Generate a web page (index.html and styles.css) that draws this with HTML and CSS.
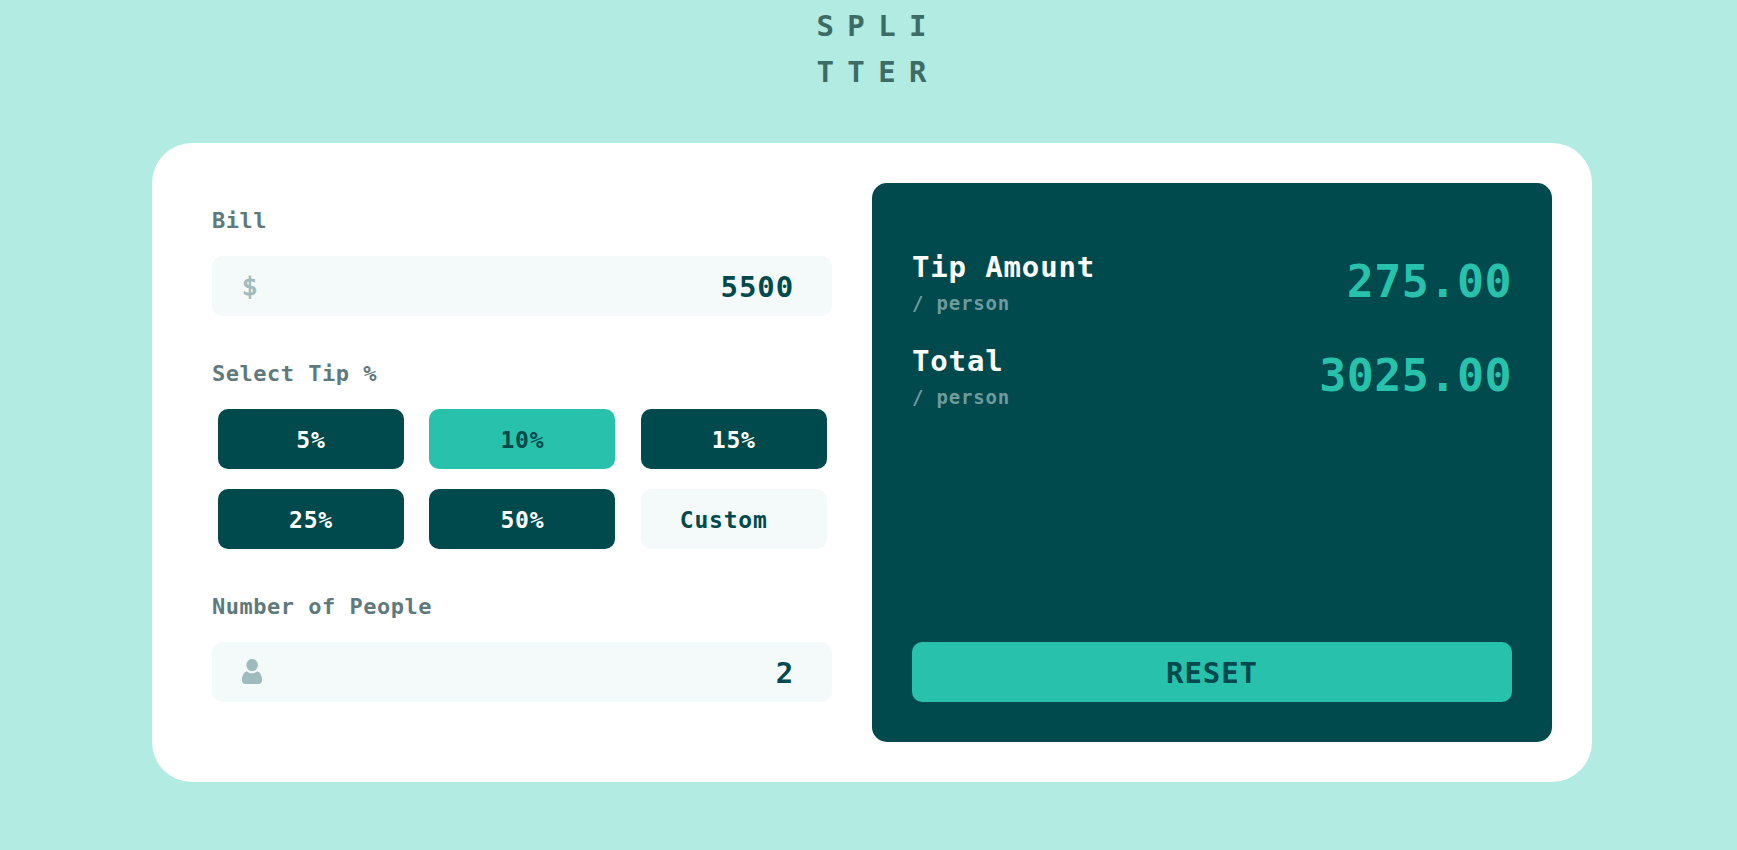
FILE: index.html
```
<!DOCTYPE html>
<html lang="en">
<head>
<meta charset="utf-8">
<title>Splitter</title>
<link rel="stylesheet" href="styles.css">
</head>
<body>
<h1 class="logo">SPLI<br>TTER</h1>
<main class="card">
  <section class="form">
    <div class="group">
      <div class="label">Bill</div>
      <div class="field"><span class="dollar">$</span><span class="value">5500</span></div>
    </div>
    <div class="group">
      <div class="label">Select Tip %</div>
      <div class="tips">
        <button class="tip">5%</button>
        <button class="tip tip-active">10%</button>
        <button class="tip">15%</button>
        <button class="tip">25%</button>
        <button class="tip">50%</button>
        <div class="tip tip-custom">Custom</div>
      </div>
    </div>
    <div class="group">
      <div class="label">Number of People</div>
      <div class="field">
        <svg class="person" viewBox="0 0 20 25"><ellipse cx="10.1" cy="6.1" rx="5.8" ry="6.1"/><path d="M4.8 12.2C7.5 14.9 12.6 14.9 15.3 12.2C18.7 13.2 20 17.5 20 21.3C20 23.7 18.8 25 16.4 25H3.6C1.2 25 0 23.7 0 21.3C0 17.5 1.4 13.2 4.8 12.2Z"/></svg>
        <span class="value">2</span>
      </div>
    </div>
  </section>
  <section class="panel">
    <div class="row">
      <div><div class="name">Tip Amount</div><div class="sub">/ person</div></div>
      <div class="amount">275.00</div>
    </div>
    <div class="row">
      <div><div class="name">Total</div><div class="sub">/ person</div></div>
      <div class="amount">3025.00</div>
    </div>
    <button class="reset">RESET</button>
  </section>
</main>
</body>
</html>
```
FILE: styles.css
```
* { box-sizing: border-box; }
body {
  margin: 0;
  height: 850px;
  overflow: hidden;
  background: #b2ebe1;
  font-family: "DejaVu Sans Mono", monospace;
  font-weight: 700;
}
button { border: 0; font: inherit; }
.logo {
  margin: 0 auto;
  padding: 3px 0 0 20px;
  width: 144px;
  height: 143px;
  font-size: 29px;
  line-height: 46px;
  letter-spacing: 13.4px;
  color: #3d6b66;
}
.card {
  display: flex;
  gap: 40px;
  width: 1440px;
  height: 639px;
  margin-left: 152px;
  padding: 40px 40px 40px 60px;
  border-radius: 40px;
  background: #fff;
}
.form {
  display: flex;
  flex-direction: column;
  gap: 41px;
  width: 620px;
  padding-top: 21px;
}
.label {
  margin-bottom: 20px;
  padding-top: 2px;
  height: 32px;
  font-size: 22px;
  line-height: 30px;
  letter-spacing: 0.5px;
  color: #5e7a7d;
}
.field {
  display: flex;
  align-items: center;
  justify-content: space-between;
  height: 60px;
  padding: 0 38px 0 30px;
  border-radius: 10px;
  background: #f4fafa;
}
.value {
  padding-top: 1px;
  font-size: 29px;
  letter-spacing: 0.9px;
  color: #00494d;
}
.dollar {
  font-size: 25px;
  font-weight: 400;
  -webkit-text-stroke: 1px #9ebbbd;
  color: #9ebbbd;
}
.person { width: 20px; height: 25px; margin-bottom: 1px; fill: #9ebbbd; }
.tips {
  display: grid;
  grid-template-columns: repeat(3, 186px);
  column-gap: 25.4px;
  row-gap: 20px;
  padding-left: 6px;
}
.tip {
  display: flex;
  align-items: center;
  justify-content: center;
  height: 60px;
  padding: 1px 0 0;
  border-radius: 10px;
  background: #00494d;
  color: #fff;
  font-size: 23px;
  letter-spacing: 0.8px;
}
.tip-active { background: #27c1ac; color: #00494d; }
.tip-custom {
  justify-content: flex-start;
  padding-left: 39px;
  background: #f4fafa;
  color: #00494d;
}
.panel {
  display: flex;
  flex-direction: column;
  gap: 20px;
  width: 680px;
  padding: 62px 40px 40px;
  border-radius: 15px;
  background: #00494d;
}
.row {
  display: flex;
  align-items: center;
  justify-content: space-between;
  height: 74px;
}
.name {
  font-size: 29px;
  line-height: 44px;
  letter-spacing: 0.85px;
  color: #fff;
}
.sub {
  padding-bottom: 2px;
  font-size: 19px;
  line-height: 28px;
  letter-spacing: 0.8px;
  color: #6f9b9d;
}
.amount {
  font-size: 45px;
  line-height: 74px;
  letter-spacing: 0.45px;
  color: #27c1ac;
}
.reset {
  height: 60px;
  margin-top: auto;
  padding: 1px 0 0;
  border-radius: 10px;
  background: #27c1ac;
  color: #00494d;
  font-size: 29px;
  letter-spacing: 0.9px;
}
```
